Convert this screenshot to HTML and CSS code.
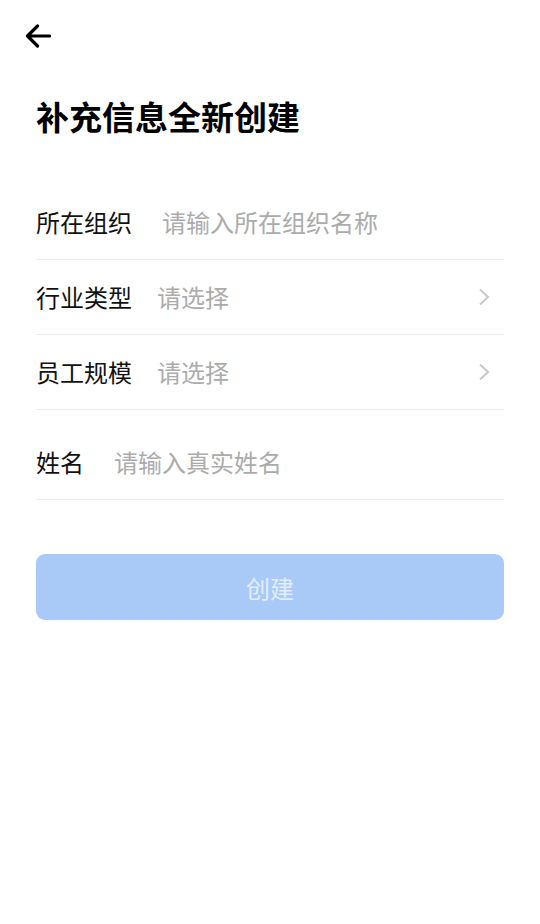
FILE: index.html
```html
<!DOCTYPE html>
<html lang="zh-CN">
<head>
<meta charset="utf-8">
<title>补充信息全新创建</title>
<link rel="stylesheet" href="styles.css">
</head>
<body>
<div class="page">
  <div class="nav">
    <svg class="back" width="26" height="24" viewBox="0 0 26 24" aria-hidden="true">
      <path d="M24.5 12H2.5M12.5 2L2.5 12L12.5 22" fill="none" stroke="#000" stroke-width="3.2" stroke-linecap="round" stroke-linejoin="round"/>
    </svg>
  </div>
  <h1 class="title">补充信息全新创建</h1>
  <div class="form">
    <div class="row">
      <span class="label">所在组织</span>
      <span class="placeholder input">请输入所在组织名称</span>
    </div>
    <div class="row">
      <span class="label">行业类型</span>
      <span class="placeholder picker">请选择</span>
      <svg class="chev" width="12" height="18" viewBox="0 0 12 18" aria-hidden="true">
        <path d="M2 1.5L10 9L2 16.5" fill="none" stroke="#c8c8c8" stroke-width="2"/>
      </svg>
    </div>
    <div class="row">
      <span class="label">员工规模</span>
      <span class="placeholder picker">请选择</span>
      <svg class="chev" width="12" height="18" viewBox="0 0 12 18" aria-hidden="true">
        <path d="M2 1.5L10 9L2 16.5" fill="none" stroke="#c8c8c8" stroke-width="2"/>
      </svg>
    </div>
    <div class="row row-name">
      <span class="label">姓名</span>
      <span class="placeholder input">请输入真实姓名</span>
    </div>
  </div>
  <button class="submit" type="button">创建</button>
</div>
</body>
</html>
```

FILE: styles.css
```css
* { box-sizing: border-box; }
html, body {
  margin: 0;
  padding: 0;
  background: #fff;
}
body {
  font-family: "Noto Sans CJK SC", "Noto Sans", sans-serif;
  color: #111;
}
.page {
  width: 540px;
  min-height: 924px;
  padding: 0 36px;
}
.nav {
  height: 72px;
  padding-top: 24px;
  margin-left: -11px;
}
.back { display: block; }
.title {
  margin: 0;
  margin-top: 21px;
  font-size: 33px;
  line-height: 46px;
  font-weight: 700;
  color: #000;
}
.form {
  margin-top: 46px;
}
.row {
  display: flex;
  align-items: center;
  height: 75px;
  border-bottom: 1px solid #ececec;
}
.row-name {
  margin-top: 15px;
}
.label {
  font-size: 24px;
  line-height: 32px;
  color: #111;
  flex: none;
}
.placeholder {
  font-size: 24px;
  line-height: 32px;
  color: #ababab;
  flex: 1;
}
.placeholder.input { margin-left: 30px; }
.placeholder.picker { margin-left: 25px; }
.chev {
  flex: none;
  margin-right: 14px;
}
.submit {
  display: block;
  width: 100%;
  height: 66px;
  margin-top: 54px;
  border: none;
  border-radius: 9px;
  background: #a9caf7;
  color: #e3edfc;
  font-family: "Noto Sans CJK SC", "Noto Sans", sans-serif;
  font-size: 24px;
  padding: 0;
}
```
